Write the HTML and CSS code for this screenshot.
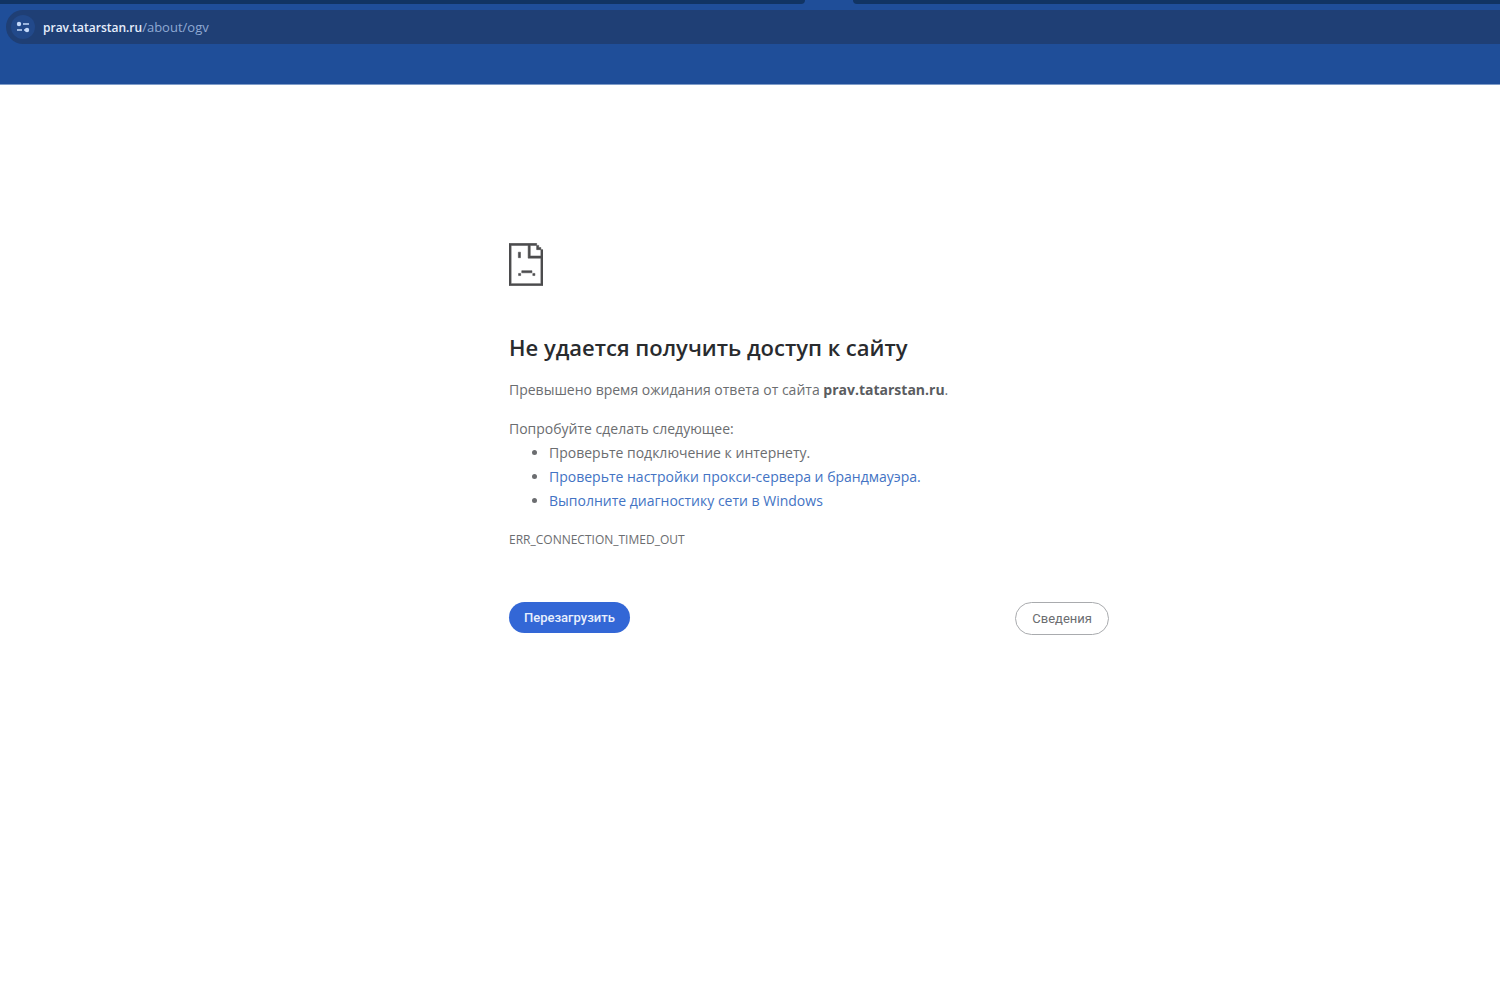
FILE: index.html
```html
<!DOCTYPE html>
<html lang="ru">
<head>
<meta charset="utf-8">
<meta name="viewport" content="width=device-width, initial-scale=1">
<title>prav.tatarstan.ru</title>
<link rel="stylesheet" href="styles.css">
</head>
<body>
<header class="browser">
  <div class="tabstrip"><span class="tabs-before"></span><span class="tabs-after"></span></div>
  <div class="omnibox">
    <button class="site-info" type="button" aria-label="Сведения о сайте">
      <svg width="14" height="14" viewBox="0 0 14 14" fill="none" stroke="currentColor" stroke-width="1.6">
        <circle cx="3" cy="4" r="2.2" fill="currentColor" stroke="none"/>
        <path d="M3 4h2M7 4h6M1 10h5M8 10h3"/>
        <circle cx="11" cy="10" r="2.2" fill="currentColor" stroke="none"/>
      </svg>
    </button>
    <span class="url"><span class="host">prav.tatarstan.ru</span>/about/ogv</span>
  </div>
</header>
<main class="error">
  <svg class="sad-page" viewBox="0 0 16 20" aria-hidden="true">
    <path d="M0 0h13v1h1v1h1v1h1v17H0zM1 1v18h14V7H9V1zM10 1v5h5V3h-2V1z" fill-rule="evenodd"/>
    <path d="M4.4 4.2h1v2.6h-1zM6 12.9h4.8v1H6zM4.5 14.2h1v1h-1zM11.2 14.2h1v1h-1z"/>
  </svg>
  <h1>Не удается получить доступ к сайту</h1>
  <p>Превышено время ожидания ответа от сайта <strong>prav.tatarstan.ru</strong>.</p>
  <div class="suggestions">
    <p>Попробуйте сделать следующее:</p>
    <ul>
      <li>Проверьте подключение к интернету.</li>
      <li><a href="#proxy">Проверьте настройки прокси-сервера и брандмауэра.</a></li>
      <li><a href="#diagnose">Выполните диагностику сети в Windows</a></li>
    </ul>
  </div>
  <p class="code">ERR_CONNECTION_TIMED_OUT</p>
  <div class="actions">
    <button class="reload" type="button">Перезагрузить</button>
    <button class="details" type="button">Сведения</button>
  </div>
</main>
</body>
</html>
```
FILE: styles.css
```css
* { box-sizing: border-box; }
body {
  margin: 0;
  background: #fff;
  color: #6b6d70;
  font: 14px/24px "Open Sans", "Noto Sans", sans-serif;
}
p, h1, ul { margin: 0; }

/* Browser toolbar */
.browser {
  height: 85px;
  background: #1f4e99;
  border-bottom: 1px solid #7f9cc8;
}
.tabstrip {
  display: flex;
  justify-content: space-between;
  gap: 48px;
  height: 4px;
}
.tabs-before, .tabs-after { background: #113463; }
.tabs-before { flex: 805; border-bottom-right-radius: 4px; }
.tabs-after { flex: 647; border-bottom-left-radius: 4px; }
.omnibox {
  display: flex;
  align-items: center;
  gap: 8px;
  height: 34px;
  margin: 6px 0 0 6px;
  padding-left: 5px;
  background: #1f3f75;
  border-radius: 17px 0 0 17px;
}
.site-info {
  display: grid;
  place-items: center;
  width: 24px;
  height: 24px;
  padding: 0;
  border: 0;
  border-radius: 50%;
  background: #22498a;
  color: #c3d9fa;
}
.url {
  color: #8fa9d3;
  font-size: 13px;
}
.host {
  color: #e6eefc;
  font-size: 12px;
  font-weight: 600;
}

/* Error page */
.error {
  width: 718px;
  max-width: 100%;
  margin: 158px auto 0;
  padding-left: 118px;
}
.sad-page {
  display: block;
  width: 34px;
  height: 43px;
  fill: #4c4c4e;
  stroke: #4c4c4e;
  stroke-width: .25;
}
h1 {
  margin: 45px 0 15px;
  color: #292b2e;
  font-size: 22px;
  font-weight: 600;
  line-height: 32px;
}
.suggestions { margin-top: 15px; }
ul { padding-left: 40px; }
a { color: #4373c4; text-decoration: none; }
strong { color: #5a5c60; }
.code {
  margin-top: 15px;
  font-size: 12px;
}
.actions {
  display: flex;
  justify-content: space-between;
  align-items: flex-start;
  margin-top: 50px;
}
.actions button {
  height: 31px;
  padding: 0 15px;
  border-radius: 17px;
  font: 500 13px/16px Roboto, "Liberation Sans", sans-serif;
}
.reload { border: 0; background: #3367d6; color: #e8effd; }
.actions .details {
  height: 33px;
  padding: 0 16px;
  border: 1px solid #a9abae;
  background: #fff;
  color: #6b6d70;
  font-weight: 400;
}
```
